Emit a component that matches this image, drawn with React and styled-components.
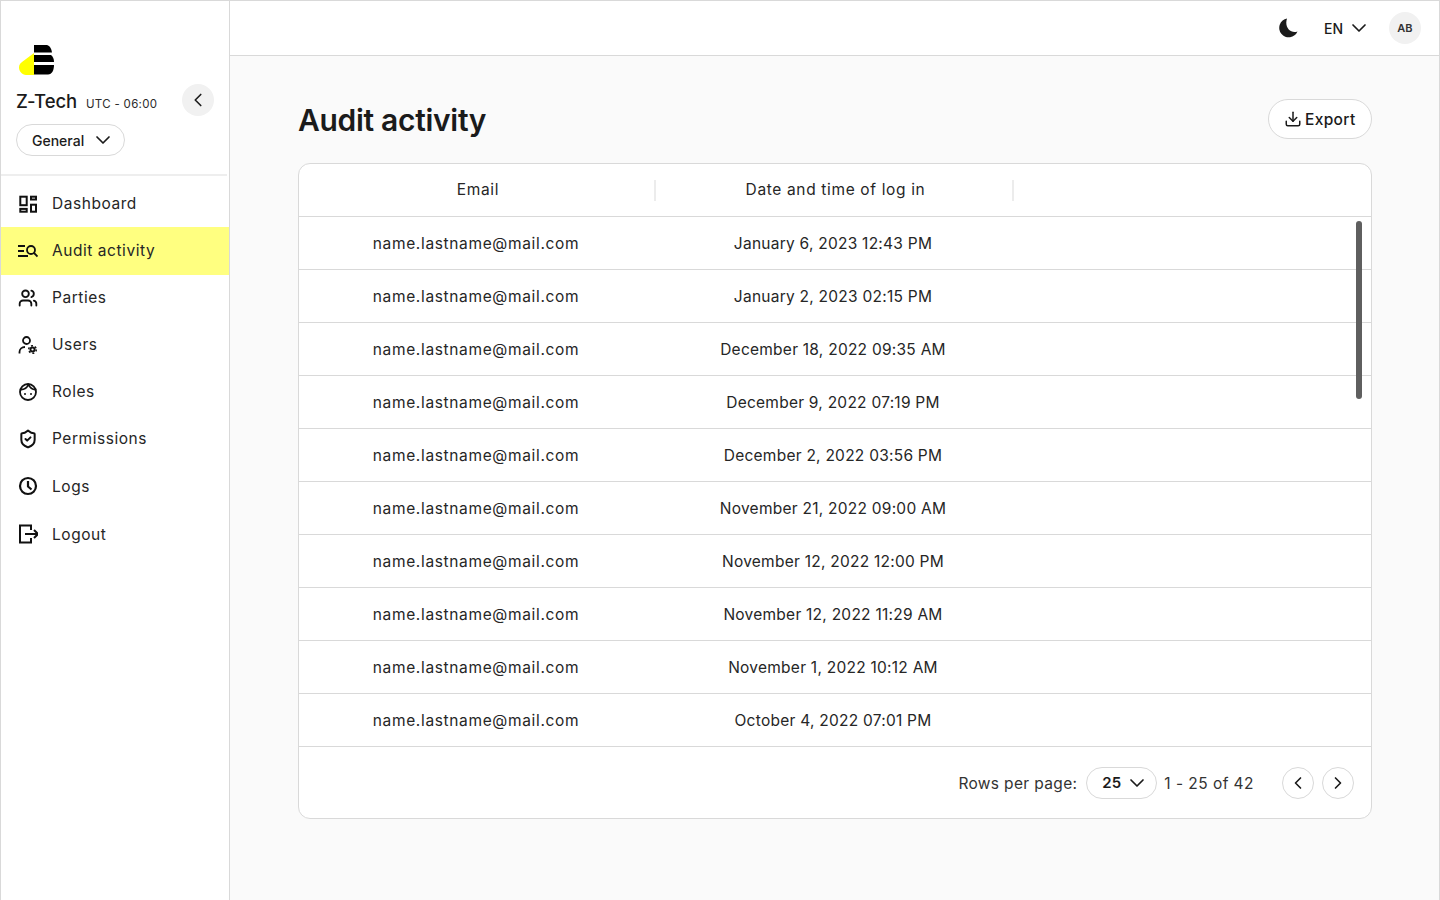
import React from "react";
import styled, { createGlobalStyle } from "styled-components";
import { ChevronDown, ChevronLeft, ChevronRight, Users as UsersIcon, ShieldCheck, Download } from "lucide-react";

const Global = createGlobalStyle`
  html, body { margin: 0; padding: 0; height: 100%; }
  body { font-family: "Inter", "Liberation Sans", sans-serif; color: #1b1b1b; background: #fafafa; }
  * { box-sizing: border-box; }
`;

const Shell = styled.div`
  display: flex; width: 1440px; height: 900px; overflow: hidden;
  border: 1px solid #d9d9d9; border-bottom: none; background: #fafafa;
`;
const Sidebar = styled.aside`
  width: 229px; flex: none; background: #fff; border-right: 1px solid #d9d9d9;
  display: flex; flex-direction: column;
`;
const Brand = styled.div`
  padding: 43px 15px 0; height: 175px; flex: none; position: relative;
  border-bottom: 2px solid #eeeeee; margin-right: 2px;
`;
const BrandRow = styled.div`
  display: flex; align-items: baseline; margin-top: 12px; height: 26px;
`;
const BrandName = styled.span`
  font-size: 18.5px; font-weight: 500; letter-spacing: -0.1px; line-height: 26px; width: 70px;
`;
const Utc = styled.span`
  font-size: 11.5px; color: #2c2c2c; letter-spacing: 0.3px;
`;
const Collapse = styled.button`
  position: absolute; left: 181px; top: 83px; width: 32px; height: 32px; border-radius: 50%;
  border: none; background: #f1f1f1; display: flex; align-items: center; justify-content: center;
  padding: 0; color: #1b1b1b;
`;
const Pill = styled.button`
  display: inline-flex; align-items: center; border: 1px solid #d9d9d9; border-radius: 16px;
  background: #fff; font-family: inherit; color: #1b1b1b;
`;
const GeneralPill = styled(Pill)`
  margin-top: 10px; height: 32px; width: 109px; padding: 0 9px 0 15px; justify-content: space-between;
  font-size: 14px; font-weight: 500;
`;
const Nav = styled.nav`
  display: flex; flex-direction: column; padding-top: 6px;
`;
const NavItem = styled.a`
  display: flex; align-items: center; height: ${p => p.$h}px; padding: 0 0 2px 17px; gap: 14px;
  font-size: 15.500px; color: #262626; letter-spacing: 0.55px;
  background: ${p => (p.$active ? "#ffff80" : "transparent")};
  svg { width: 20px; height: 20px; flex: none; color: #111; }
`;
const Main = styled.div`
  flex: 1; display: flex; flex-direction: column; min-width: 0;
`;
const Topbar = styled.header`
  height: 55px; flex: none; background: #fff; border-bottom: 1px solid #d9d9d9;
  display: flex; align-items: center; justify-content: flex-end; padding: 0 18px 0 0;
`;
const Lang = styled.div`
  display: flex; align-items: center; gap: 4px; font-size: 14px; font-weight: 500; margin-left: 26px;
`;
const Avatar = styled.div`
  width: 32px; height: 32px; border-radius: 50%; background: #f1f1f1; margin-left: 18px;
  display: flex; align-items: center; justify-content: center; font-size: 11px; font-weight: 600; color: #333;
`;
const Content = styled.main`
  padding: 43px 67px 0 68px;
`;
const TitleRow = styled.div`
  display: flex; justify-content: space-between; align-items: center; height: 40px; margin-bottom: 24px;
`;
const Title = styled.h1`
  margin: 2px 0 0; font-size: 30px; font-weight: 600; letter-spacing: -0.3px;
`;
const ExportBtn = styled(Pill)`
  height: 40px; width: 104px; border-radius: 20px; padding: 0 0 0 15px; gap: 3px;
  font-size: 15.500px; font-weight: 500; letter-spacing: 0.35px;
`;
const Card = styled.section`
  position: relative; background: #fff; border: 1px solid #d9d9d9; border-radius: 12px; height: 656px;
  overflow: hidden;
`;
const Row = styled.div`
  display: grid; grid-template-columns: 357px 358px 1fr; height: 53px; align-items: center;
  border-bottom: 1px solid #d9d9d9; font-size: 15.500px; color: #262626;
`;
const Cell = styled.div`
  text-align: center; padding-right: ${p => p.$pad}px; letter-spacing: ${p => p.$ls}px;
`;
const HeadCell = styled.div`
  text-align: center; height: 21px; line-height: 19px; padding-left: 3px; letter-spacing: 0.65px;
  border-right: 2px solid #ececec;
`;
const Scrollbar = styled.div`
  position: absolute; left: 1057px; top: 57px; width: 6px; height: 178px; border-radius: 3px; background: #5f5f5f;
`;
const Footer = styled.div`
  height: 71px; display: flex; align-items: center; justify-content: flex-end; padding: 2px 17px 0 0;
  font-size: 15.500px; color: #333;
`;
const RowsLabel = styled.span`
  letter-spacing: 0.35px;
`;
const RangeLabel = styled.span`
  letter-spacing: 0.45px;
`;
const PageSize = styled(Pill)`
  height: 32px; width: 71px; margin: -2px 7px 0 9px; padding: 0 7px 0 15px; justify-content: space-between;
  font-size: 15px; font-weight: 600;
`;
const PageBtn = styled(Pill)`
  width: 32px; height: 32px; border-radius: 50%; padding: 0; justify-content: center;
  margin: -2px 0 0 ${p => p.$ml}px;
`;

const Ic = ({ children, sw = 2 }) => (
  <svg viewBox="0 0 20 20" fill="none" stroke="currentColor" strokeWidth={sw} strokeLinecap="round" strokeLinejoin="round">{children}</svg>
);

const Logo = () => (
  <svg width="36" height="32" viewBox="0 0 36 32" style={{ display: "block", marginLeft: 2 }}>
    <path d="M16 9 L16 31 L8 31 C4 31 1 27 1 23.500 C1 21 2 19.500 4 18 Z" fill="#ffff00" />
    <path d="M16 1 H28 C31 1 33 3 34 8.500 H16 Z" fill="#000" />
    <path d="M16 11 H33 C35 12.500 36 15 36 18 H16 Z" fill="#000" />
    <path d="M16 21 H36 C36 26 34 30.500 30 30.500 H16 Z" fill="#000" />
  </svg>
);

const Dash = () => (
  <Ic><g strokeLinecap="butt" strokeLinejoin="miter">
    <rect x="2.300" y="2.700" width="6.400" height="8.500" /><rect x="13" y="2.700" width="5" height="2.800" />
    <rect x="2.300" y="14.900" width="6.400" height="2.800" /><rect x="13" y="10.700" width="5" height="7" />
  </g></Ic>
);
const Audit = () => (
  <Ic sw={1.8}><g strokeLinecap="butt">
    <path d="M0 6H7M0 11H6M0 16H10" /><circle cx="13" cy="10" r="4" /><path d="M16 13L19.500 16.500" />
  </g></Ic>
);
const UserGear = () => (
  <Ic sw={1.8}>
    <circle cx="8.500" cy="5.500" r="3.500" /><path d="M1.500 18.500v-1.500C1.500 14 4 12 7 12" strokeLinecap="butt" />
    <circle cx="14.500" cy="14.500" r="3" fill="currentColor" stroke="none" />
    <circle cx="14.500" cy="14.500" r="3.800" strokeDasharray="2 1.980" strokeLinecap="butt" strokeWidth="1.500" />
    <circle cx="14.500" cy="14.500" r="1.100" fill="#fff" stroke="none" />
  </Ic>
);
const Face = () => (
  <Ic sw={1.8}>
    <circle cx="10" cy="10" r="8" />
    <path d="M3 7.500C6 7.500 9 6 10.500 2.500C12 6 14.500 7.500 17.500 7.500" />
    <circle cx="7" cy="12" r="1" fill="currentColor" stroke="none" /><circle cx="13" cy="12" r="1" fill="currentColor" stroke="none" />
  </Ic>
);
const ClockI = () => (
  <Ic sw={2.2}><circle cx="10" cy="10" r="8" /><path d="M10 5V10.500L13.500 13.500" strokeLinecap="butt" /></Ic>
);
const LogoutI = () => (
  <Ic sw={2}><g strokeLinecap="butt" strokeLinejoin="miter">
    <path d="M13 6V1.500H2V18.500H13V14" /><path d="M7 10H20M16 6L20 10L16 14" />
  </g></Ic>
);
const Moon = () => (
  <svg width="20" height="20" viewBox="0 0 20 20" fill="#1b1b1b"><path d="M9 .500A9.500 9.500 0 1 0 19.500 13.500C13 16 6 10 9 .500Z" /></svg>
);

const navItems = [
  ["Dashboard", <Dash />, 45],
  ["Audit activity", <Audit />, 48, true],
  ["Parties", <UsersIcon strokeWidth={2.2} />, 47],
  ["Users", <UserGear />, 47],
  ["Roles", <Face />, 47],
  ["Permissions", <ShieldCheck strokeWidth={2.4} />, 47],
  ["Logs", <ClockI />, 48],
  ["Logout", <LogoutI />, 48],
];
const dates = [
  "January 6, 2023 12:43 PM", "January 2, 2023 02:15 PM", "December 18, 2022 09:35 AM",
  "December 9, 2022 07:19 PM", "December 2, 2022 03:56 PM", "November 21, 2022 09:00 AM",
  "November 12, 2022 12:00 PM", "November 12, 2022 11:29 AM", "November 1, 2022 10:12 AM",
  "October 4, 2022 07:01 PM",
];

export default function App() {
  return (
    <>
      <Global />
      <Shell>
        <Sidebar>
          <Brand>
            <Logo />
            <BrandRow><BrandName>Z-Tech</BrandName><Utc>UTC - 06:00</Utc></BrandRow>
            <Collapse><ChevronLeft size={22} strokeWidth={1.8} /></Collapse>
            <GeneralPill>General<ChevronDown size={24} strokeWidth={1.7} /></GeneralPill>
          </Brand>
          <Nav>
            {navItems.map(([label, icon, h, active]) => (
              <NavItem key={label} $h={h} $active={active}>{icon}{label}</NavItem>
            ))}
          </Nav>
        </Sidebar>
        <Main>
          <Topbar>
            <Moon />
            <Lang>EN<ChevronDown size={24} strokeWidth={1.7} /></Lang>
            <Avatar>AB</Avatar>
          </Topbar>
          <Content>
            <TitleRow>
              <Title>Audit activity</Title>
              <ExportBtn><Download size={18} />Export</ExportBtn>
            </TitleRow>
            <Card>
              <Row>
                <HeadCell>Email</HeadCell>
                <HeadCell>Date and time of log in</HeadCell>
                <div />
              </Row>
              {dates.map((d, i) => (
                <Row key={i}>
                  <Cell $pad={3} $ls={0.65}>name.lastname@mail.com</Cell>
                  <Cell $pad={4} $ls={0.25}>{d}</Cell>
                  <div />
                </Row>
              ))}
              <Footer>
                <RowsLabel>Rows per page:</RowsLabel>
                <PageSize>25<ChevronDown size={24} strokeWidth={1.7} /></PageSize>
                <RangeLabel>1 - 25 of 42</RangeLabel>
                <PageBtn $ml={28}><ChevronLeft size={20} /></PageBtn>
                <PageBtn $ml={8}><ChevronRight size={20} /></PageBtn>
              </Footer>
              <Scrollbar />
            </Card>
          </Content>
        </Main>
      </Shell>
    </>
  );
}
